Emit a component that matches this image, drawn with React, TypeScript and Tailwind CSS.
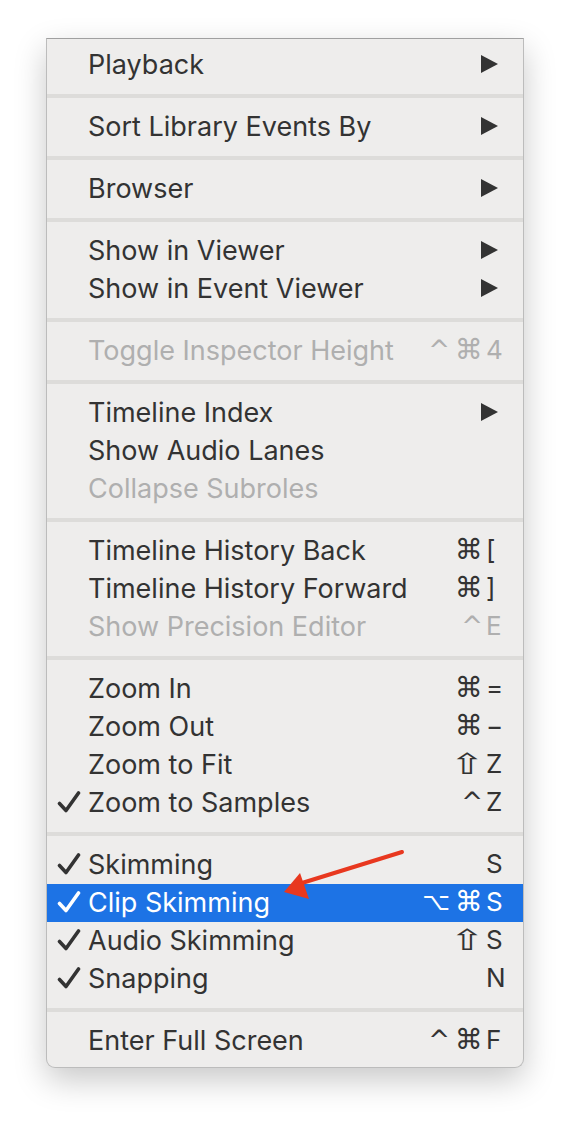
import React from 'react';

type Item = {
  label: string;
  submenu?: boolean;
  disabled?: boolean;
  checked?: boolean;
  selected?: boolean;
  mods?: string[];
  keyName?: string;
};

const SECTIONS: Item[][] = [
  [{ label: 'Playback', submenu: true }],
  [{ label: 'Sort Library Events By', submenu: true }],
  [{ label: 'Browser', submenu: true }],
  [
    { label: 'Show in Viewer', submenu: true },
    { label: 'Show in Event Viewer', submenu: true },
  ],
  [{ label: 'Toggle Inspector Height', disabled: true, mods: ['^', '⌘'], keyName: '4' }],
  [
    { label: 'Timeline Index', submenu: true },
    { label: 'Show Audio Lanes' },
    { label: 'Collapse Subroles', disabled: true },
  ],
  [
    { label: 'Timeline History Back', mods: ['⌘'], keyName: '[' },
    { label: 'Timeline History Forward', mods: ['⌘'], keyName: ']' },
    { label: 'Show Precision Editor', disabled: true, mods: ['^'], keyName: 'E' },
  ],
  [
    { label: 'Zoom In', mods: ['⌘'], keyName: '=' },
    { label: 'Zoom Out', mods: ['⌘'], keyName: '−' },
    { label: 'Zoom to Fit', mods: ['⇧'], keyName: 'Z' },
    { label: 'Zoom to Samples', checked: true, mods: ['^'], keyName: 'Z' },
  ],
  [
    { label: 'Skimming', checked: true, keyName: 'S' },
    { label: 'Clip Skimming', checked: true, selected: true, mods: ['⌥', '⌘'], keyName: 'S' },
    { label: 'Audio Skimming', checked: true, mods: ['⇧'], keyName: 'S' },
    { label: 'Snapping', checked: true, keyName: 'N' },
  ],
  [{ label: 'Enter Full Screen', mods: ['^', '⌘'], keyName: 'F' }],
];

// modifier glyphs come from DejaVu; sizes tuned per glyph so they read like the mac ones
const MOD_CLASS: Record<string, string> = {
  '^': 'text-[26px]',
  '⌘': 'text-[28px]',
  '⌥': 'text-[24px]',
  '⇧': 'inline-block text-[29px] scale-x-[1.45] mx-[4px]',
};

function Check() {
  return (
    <svg width="24" height="24" viewBox="0 0 24 24" className="block">
      <path d="M2.5 13.5 L9 20.5 L21.5 3" fill="none" stroke="currentColor" strokeWidth="3.6" strokeLinecap="round" strokeLinejoin="round" />
    </svg>
  );
}

function MenuRow({ item }: { item: Item }) {
  const tone = item.selected
    ? 'bg-[#1d73e5] text-white'
    : item.disabled
    ? 'text-[#afafaf]'
    : 'text-[#333333]';
  return (
    <div className={`flex items-center h-[38px] pr-[21px] pb-[2px] ${tone}`}>
      <div className="w-[41px] pl-[10px] flex-shrink-0">{item.checked && <Check />}</div>
      <span className="flex-1 whitespace-nowrap">{item.label}</span>
      {item.submenu && (
        <svg width="18" height="18" viewBox="0 0 18 18" className="mr-[3px]">
          <path d="M0 0 L17 9 L0 18 Z" fill="#333333" />
        </svg>
      )}
      {item.keyName && (
        <span className="flex items-center">
          <span className="flex items-center gap-[5px] pr-[3px] font-['DejaVu_Sans',sans-serif]">
            {item.mods?.map((m, i) => (
              <span key={i} className={MOD_CLASS[m]}>
                {m}
              </span>
            ))}
          </span>
          <span className="w-[16px] text-[26px]">{item.keyName}</span>
        </span>
      )}
    </div>
  );
}

export default function App() {
  return (
    <div className="relative w-[570px] h-[1122px] bg-white pt-[38px] pl-[46px] font-['Inter','Liberation_Sans',sans-serif] text-[27px] leading-none">
      <div className="w-[478px] bg-[#eeedec] border border-[#bcbcbc] border-t-[#a0a0a0] rounded-b-[9px] py-[7px] shadow-[0_12px_32px_rgba(0,0,0,0.22)]">
        {SECTIONS.map((section, i) => (
          <div key={i}>
            {i > 0 && <div className="h-[4px] my-[10px] bg-[#dddcda]" />}
            {section.map((item) => (
              <MenuRow key={item.label} item={item} />
            ))}
          </div>
        ))}
      </div>
      <svg className="absolute left-0 top-0 pointer-events-none" width="570" height="1122">
        <path d="M402 852 L302 883" stroke="#e8381f" strokeWidth="4" strokeLinecap="round" />
        <path d="M284 892 L300 873 L309 899 Z" fill="#e8381f" />
      </svg>
    </div>
  );
}
